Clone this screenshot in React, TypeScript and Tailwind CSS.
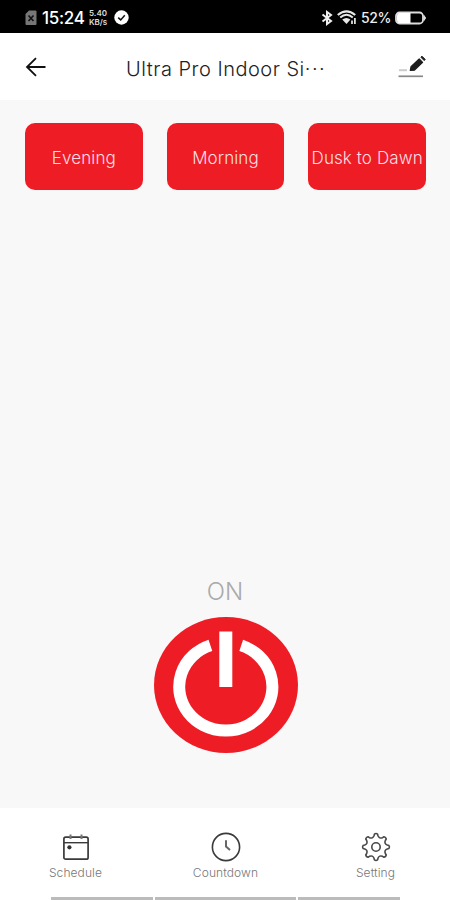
const presets = ["Evening", "Morning", "Dusk to Dawn"]

function SimIcon() {
  return (
    <svg width="12" height="16" viewBox="0 0 12 16">
      <path d="M4 0.5H10.5Q11.5 0.5 11.5 1.5V14Q11.5 15 10.5 15H1.5Q0.5 15 0.5 14V4Z" fill="#777" />
      <path d="M3.5 5.5L8.5 11M8.5 5.5L3.5 11" stroke="#111" strokeWidth="1.6" />
    </svg>
  )
}

function CheckBadge() {
  return (
    <svg width="15" height="15" viewBox="0 0 15 15">
      <circle cx="7.5" cy="7.5" r="7.2" fill="#fff" />
      <path d="M4.2 7.6L6.7 9.9L10.8 5.2" fill="none" stroke="#111" strokeWidth="1.5" />
    </svg>
  )
}

function BluetoothIcon() {
  return (
    <svg width="12" height="16" viewBox="0 0 12 16" fill="none" stroke="#eee" strokeWidth="2">
      <path d="M1.5 4.5L10 11L6 14V2L10 5L1.5 11.5" />
    </svg>
  )
}

function WifiIcon() {
  return (
    <svg width="20" height="15" viewBox="0 0 20 15" fill="none" stroke="#e8e8e8">
      <path d="M0.8 5Q9.5 -2.4 18.2 5" strokeWidth="2.2" />
      <path d="M3.2 7.6Q9.5 2 15.8 7.6" strokeWidth="2" />
      <path d="M5.2 9.6Q9.5 6.2 13.4 9.6L9.5 14Z" fill="#e8e8e8" stroke="none" />
      <path d="M15 14V10.5M17.9 14V8" strokeWidth="1.7" />
    </svg>
  )
}

function BatteryIcon() {
  return (
    <svg width="32" height="14" viewBox="0 0 32 14">
      <rect x="1" y="1.5" width="27" height="11" rx="3.5" fill="none" stroke="#ddd" strokeWidth="1.8" />
      <path d="M4 2H15.5V12H4Q2 12 2 9V4.5Q2 2 4 2Z" fill="#fff" />
      <path d="M29 4.5L30.6 7L29 9.5Z" fill="#ddd" stroke="#ddd" />
    </svg>
  )
}

function PencilIcon() {
  return (
    <svg width="30" height="24" viewBox="0 0 30 24">
      <path d="M2 15.2H10" stroke="#ccc" strokeWidth="2" />
      <path d="M1.5 21.3H26" stroke="#888" strokeWidth="1.7" />
      <path d="M13.3 15.4L14 11.8L22.2 3.9L25.6 7.3L17.3 15.2Z" fill="#1c1c1c" stroke="#1c1c1c" strokeWidth="1.2" strokeLinejoin="round" />
      <path d="M23.9 2.2L25 1.2L28.2 4.4L27.2 5.6Z" fill="#1c1c1c" stroke="#1c1c1c" strokeWidth="1" strokeLinejoin="round" />
    </svg>
  )
}

function PowerIcon() {
  return (
    <svg width="144" height="136" viewBox="0 0 144 136">
      <ellipse cx="72" cy="68" rx="72" ry="68" fill="#ee1c25" />
      <path d="M56.4 28.4A46.6 43.8 0 1 0 87.2 28.4" fill="none" stroke="#fff" strokeWidth="12" />
      <rect x="65.3" y="14.5" width="13" height="55.5" fill="#fff" />
    </svg>
  )
}

function CalendarIcon() {
  return (
    <svg width="28" height="28" viewBox="0 0 28 28" fill="none" stroke="#3a3a3a">
      <rect x="1.9" y="4.2" width="24.2" height="22" rx="1.8" strokeWidth="1.7" />
      <path d="M2 9.7H26" strokeWidth="1.4" />
      <path d="M8.5 1.4V6M19.5 1.4V6" strokeWidth="2" stroke="#777" />
      <circle cx="7.4" cy="14.3" r="2.1" fill="#333" stroke="none" />
    </svg>
  )
}

function ClockIcon() {
  return (
    <svg width="30" height="30" viewBox="0 0 30 30" fill="none" stroke="#3a3a3a">
      <circle cx="15" cy="15" r="13.6" strokeWidth="1.6" />
      <path d="M15 8.2V14.6L19 18" strokeWidth="2" stroke="#666" />
    </svg>
  )
}

// Eight rounded teeth around a small hub
const toothAngles = [0, 45, 90, 135, 180, 225, 270, 315]

function gearPath() {
  const point = (radius: number, degrees: number) => {
    const a = ((degrees - 90) * Math.PI) / 180
    return `${(15 + radius * Math.cos(a)).toFixed(2)} ${(15 + radius * Math.sin(a)).toFixed(2)}`
  }
  return (
    toothAngles
      .map((a, i) => {
        const start = `${i === 0 ? "M" : "L"}${point(13, a - 7)}`
        return `${start}Q${point(14, a)} ${point(13, a + 7)}L${point(11.4, a + 10)}Q${point(8.6, a + 22.5)} ${point(11.4, a + 35)}`
      })
      .join("") + "Z"
  )
}

function GearIcon() {
  return (
    <svg width="30" height="30" viewBox="0 0 30 30" fill="none" stroke="#484848" strokeWidth="1.6" strokeLinejoin="round">
      <path d={gearPath()} />
      <circle cx="15" cy="15" r="4.2" />
    </svg>
  )
}

const tabs = [
  { label: "Schedule", icon: CalendarIcon },
  { label: "Countdown", icon: ClockIcon },
  { label: "Setting", icon: GearIcon },
]

export default function App() {
  return (
    <div className="flex h-[900px] w-[450px] flex-col overflow-hidden bg-[#f8f8f8] font-['Inter','Liberation_Sans',sans-serif]">
      <div className="flex h-[33px] shrink-0 items-center bg-black pl-[25px] pr-[23px] pt-[2px] text-white">
        <SimIcon />
        <span className="ml-[5px] mt-[2px] w-[43px] whitespace-nowrap text-[17px] font-medium leading-none tracking-[-0.3px]">15:24</span>
        <span className="ml-[4px] grid w-[20px] grid-rows-2 gap-px text-[8px] font-semibold leading-[8px] text-[#ddd]">
          <span className="h-[8px]">5.40</span>
          <span className="h-[8px] tracking-[-0.1px]">KB/s</span>
        </span>
        <span className="ml-[5px]">
          <CheckBadge />
        </span>
        <span className="ml-auto">
          <BluetoothIcon />
        </span>
        <span className="ml-[4px]">
          <WifiIcon />
        </span>
        <span className="ml-[4px] w-[31px] whitespace-nowrap text-[14px] font-medium leading-none tracking-[-0.4px] text-[#eee]">52%</span>
        <span className="ml-[3px]">
          <BatteryIcon />
        </span>
      </div>

      <header className="flex h-[67px] shrink-0 items-center bg-white pl-[25px] pr-[23px]">
        <svg width="22" height="20" viewBox="0 0 22 20" fill="none" stroke="#111" strokeWidth="1.8">
          <path d="M11 1.2L2 10L11 18.8M2 10H20.5" />
        </svg>
        <h1 className="ml-[79px] mt-[4px] whitespace-nowrap text-[20px] font-light leading-6 tracking-[0.5px] text-[#222]">
          Ultra Pro Indoor Si<span className="tracking-[1.5px]">···</span>
        </h1>
        <span className="ml-auto">
          <PencilIcon />
        </span>
      </header>

      <main className="flex flex-1 flex-col">
        <div className="grid grid-cols-3 gap-6 pl-[25px] pr-[24px] pt-[23px]">
          {presets.map((preset) => (
            <button
              key={preset}
              className="flex h-[67px] items-center justify-center whitespace-nowrap rounded-[10px] bg-[#ee1c25] pt-[5px] text-[17px] font-light tracking-[0.1px] text-[#ffdfe1]"
            >
              {preset}
            </button>
          ))}
        </div>

        <div className="mt-auto flex flex-col items-center pb-[55px]">
          <span className="text-[24px] font-light leading-[30px] text-[#aaa]">ON</span>
          <button className="mt-[10px] pl-[1px]">
            <PowerIcon />
          </button>
        </div>
      </main>

      <nav className="flex h-[92px] shrink-0 flex-col bg-white">
        <div className="grid flex-1 grid-cols-3">
          {tabs.map(({ label, icon: Icon }) => (
            <div key={label} className="flex flex-col items-center pt-[24px]">
              <span className="flex h-[30px] items-center pl-[1px]">
                <Icon />
              </span>
              <span className="mt-[3px] pl-[1px] text-[12px] font-light leading-4 tracking-[0.1px] text-[#777]">{label}</span>
            </div>
          ))}
        </div>
        <div className="flex h-[3px] gap-[2px] pl-[51px]">
          <span className="w-[102px] bg-[#bbb]" />
          <span className="w-[141px] bg-[#bbb]" />
          <span className="w-[102px] bg-[#bbb]" />
        </div>
      </nav>
    </div>
  )
}
